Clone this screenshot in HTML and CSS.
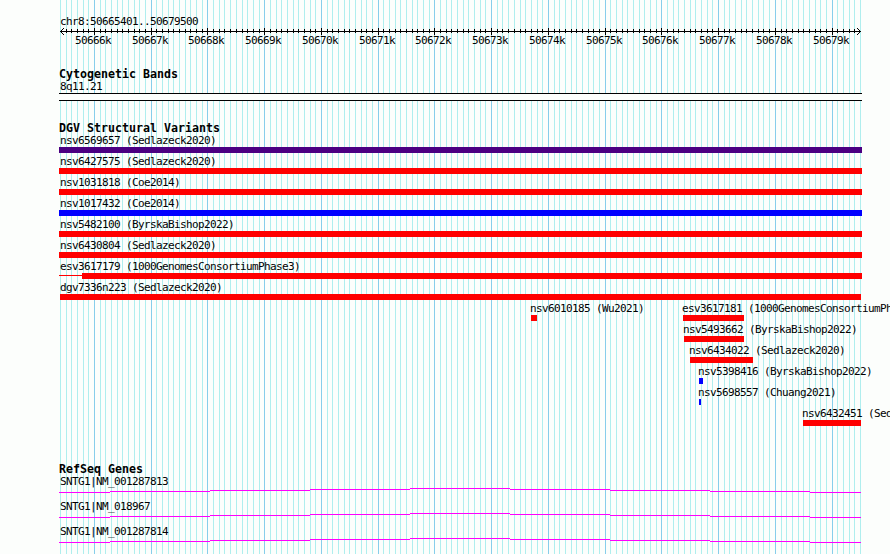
FILE: index.html
```html
<!DOCTYPE html>
<html lang="en">
<head>
<meta charset="utf-8">
<title>chr8:50665401..50679500</title>
<link rel="stylesheet" href="styles.css">
</head>
<body>
<main class="viewer">
  <svg class="grid" id="grid" width="890" height="554" shape-rendering="crispEdges" aria-hidden="true"></svg>

  <header class="ruler">
    <div class="region">chr8:50665401..50679500</div>
    <svg class="scale" id="scale" width="890" height="9" shape-rendering="crispEdges" aria-hidden="true"></svg>
    <div class="ticks" id="ticks"></div>
  </header>

  <section class="track cytobands">
    <h2>Cytogenetic Bands</h2>
    <div class="label cyto">8q11.21</div>
    <div class="band"></div>
  </section>

  <section class="track variants">
    <h2>DGV Structural Variants</h2>
    <div id="variants"></div>
  </section>

  <section class="track genes">
    <h2>RefSeq Genes</h2>
    <div id="genes"></div>
  </section>
</main>
<script src="tracks.js"></script>
</body>
</html>
```
FILE: styles.css
```css
* { box-sizing: border-box; }

body {
  margin: 0;
  background: #fcfefc;
  color: #000;
  font: 11px/12px "DejaVu Sans Mono", monospace;
  letter-spacing: -0.622px;
  overflow: hidden;
}

.viewer {
  position: relative;
  width: 890px;
  height: 554px;
  overflow: hidden;
  white-space: nowrap;
}

.grid {
  position: absolute;
  inset: 0;
  z-index: -1;
}

.minor { fill: #afeeee; }
.major { fill: #87ceeb; }

.ruler { padding-top: 16px; }
.region { padding-left: 60px; height: 11px; line-height: 12px; }
.scale { display: block; }

.ticks {
  display: flex;
  height: 34px;
  margin-top: -1px;
}
.ticks span { width: 36px; flex: none; }

h2 {
  margin: 0;
  padding-left: 59px;
  height: 12px;
  font-size: 11.63px;
  line-height: 10px;
  font-weight: bold;
  letter-spacing: 0;
}

.label { height: 12px; padding-left: 60px; }

.band {
  width: 803px;
  height: 8px;
  margin-left: 59px;
  border: solid #000;
  border-width: 1px 0;
  background: #fcfefc;
}

.variants { margin-top: 22px; }
.variant { height: 21px; }
.variant .label { padding-left: 0; }
.bar { height: 6px; }
.shared { display: flex; }
.shared > :first-child { width: 623px; flex: none; }
.red { background: #f00; }
.blue { background: #00f; }
.indigo { background: #4b0082; }
.partial { display: flex; align-items: flex-start; }
.partial .thin { width: 23px; height: 1px; background: #f00; margin-top: 2px; }
.partial .thick { flex: 1; height: 6px; background: #f00; }

.genes { margin-top: 35px; }
.gene { height: 25px; }
.gene svg { display: block; fill: #f0f; }
```
FILE: tracks.js
```js
const START = 50665401, END = 50679500, LEFT = 60, WIDTH = 800;
const toX = bp => Math.round(LEFT + (bp - START) * WIDTH / (END - START + 1));
const rect = (x, y, w, h, c = '') => `<rect class="${c}" x="${x}" y="${y}" width="${w}" height="${h}"/>`;

// Grid lines and ruler ticks, one per 100 bases
let grid = '', scale = rect(60, 4, 801, 1), ticks = '', cursor = 0;
for (let bp = 50665400; bp <= END; bp += 100) {
  const x = toX(bp), major = bp % 1000 === 0;
  grid += rect(x, 0, 1, 554, major ? 'major' : 'minor');
  if (x > 60 && x < 860) scale += major ? rect(x, 1, 1, 7) : rect(x, 2, 1, 4);
  if (major) {
    ticks += `<span style="margin-left:${x - 19 - cursor}px">${bp / 1000}k</span>`;
    cursor = x + 17;
  }
}
for (let i = 1; i < 4; i++) {
  scale += rect(60 + i, 4 - i, 1, 1) + rect(60 + i, 4 + i, 1, 1);
  scale += rect(860 - i, 4 - i, 1, 1) + rect(860 - i, 4 + i, 1, 1);
}
document.getElementById('grid').innerHTML = grid;
document.getElementById('scale').innerHTML = scale;
document.getElementById('ticks').innerHTML = ticks;

// name, colour, bar start, bar end, label start
const variants = [
  ['nsv6569657 (Sedlazeck2020)', 'indigo', 59, 862, 60],
  ['nsv6427575 (Sedlazeck2020)', 'red', 59, 862, 60],
  ['nsv1031818 (Coe2014)', 'red', 59, 862, 60],
  ['nsv1017432 (Coe2014)', 'blue', 59, 862, 60],
  ['nsv5482100 (ByrskaBishop2022)', 'red', 59, 862, 60],
  ['nsv6430804 (Sedlazeck2020)', 'red', 59, 862, 60],
  ['esv3617179 (1000GenomesConsortiumPhase3)', 'partial', 59, 862, 60],
  ['dgv7336n223 (Sedlazeck2020)', 'red', 60, 861, 60],
  null,
  ['nsv5493662 (ByrskaBishop2022)', 'red', 684, 744, 683],
  ['nsv6434022 (Sedlazeck2020)', 'red', 690, 753, 689],
  ['nsv5398416 (ByrskaBishop2022)', 'blue', 699, 703, 698],
  ['nsv5698557 (Chuang2021)', 'blue', 699, 701, 698],
  ['nsv6432451 (Sed', 'red', 803, 861, 802]
];
const label = (n, x) => `<div class="label" style="margin-left:${x}px">${n}</div>`;
const bar = (c, a, b) => `<div class="bar ${c}" style="margin-left:${a}px;width:${b - a}px">` +
  (c === 'partial' ? '<div class="thin"></div><div class="thick"></div>' : '') + '</div>';
document.getElementById('variants').innerHTML = variants.map(v => v
  ? `<div class="variant">${label(v[0], v[4])}${bar(v[1], v[2], v[3])}</div>`
  : `<div class="variant shared">` +
    `<div>${label('nsv6010185 (Wu2021)', 530)}${bar('red', 531, 537)}</div>` +
    `<div>${label('esv3617181 (1000GenomesConsortiumPh', 59)}${bar('red', 60, 121)}</div></div>`
).join('');

// Intron lines rise and fall by one pixel per step
const steps = [[59, 110, 4], [110, 210, 3], [210, 310, 2], [310, 410, 1], [410, 510, 0],
  [510, 610, 1], [610, 710, 2], [710, 810, 3], [810, 861, 4]];
document.getElementById('genes').innerHTML =
  ['SNTG1|NM_001287813', 'SNTG1|NM_018967', 'SNTG1|NM_001287814'].map(n =>
    `<div class="gene"><div class="label">${n}</div><svg width="890" height="5" shape-rendering="crispEdges">` +
    steps.map(([a, b, y]) => rect(a, y, b - a, 1)).join('') + '</svg></div>').join('');
```
